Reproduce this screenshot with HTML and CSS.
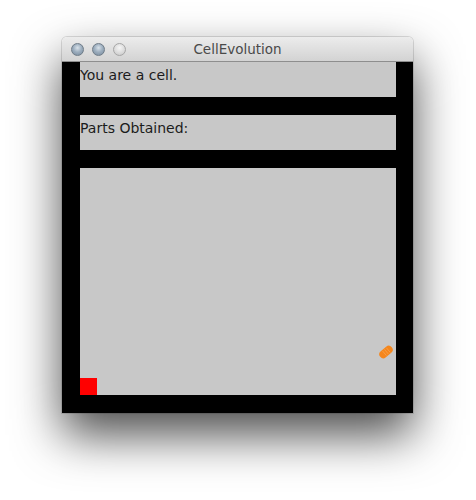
FILE: index.html
```html
<!DOCTYPE html>
<html>
<head>
<meta charset="utf-8">
<link rel="stylesheet" href="styles.css">
</head>
<body>
<div class="stage">
  <div class="window">
    <div class="titlebar">
      <div class="lights">
        <span class="light"></span>
        <span class="light"></span>
        <span class="light off"></span>
      </div>
      <div class="title">CellEvolution</div>
    </div>
    <div class="content">
      <div class="panel info">You are a cell.</div>
      <div class="panel info">Parts Obtained:</div>
      <div class="panel field">
        <div class="part">
          <svg width="18" height="18" viewBox="0 0 18 18">
            <g transform="rotate(-40 9 9)">
              <rect x="1.5" y="5" width="15" height="8" rx="4" fill="#f5861c"/>
              <path d="M7 6v6M9.5 6v6M12 6v6" stroke="#f8a04a" stroke-width="0.8"/>
            </g>
          </svg>
        </div>
        <div class="cell"></div>
      </div>
    </div>
  </div>
</div>
</body>
</html>
```
FILE: styles.css
```css
html, body {
  margin: 0;
  padding: 0;
  background: #ffffff;
}
.stage {
  width: 476px;
  height: 500px;
  padding: 37px 0 0 62px;
  box-sizing: border-box;
}
.window {
  width: 351px;
  border-radius: 5px 5px 0 0;
  box-shadow: 0 22px 48px rgba(0, 0, 0, 0.7), 0 0 0 1px rgba(0, 0, 0, 0.12);
}
.titlebar {
  height: 25px;
  box-sizing: border-box;
  border-radius: 5px 5px 0 0;
  background: linear-gradient(#ececec, #d3d3d3);
  border-bottom: 1px solid #8e8e8e;
  display: flex;
  align-items: center;
  position: relative;
  padding-left: 9px;
}
.lights {
  display: flex;
  gap: 8px;
}
.light {
  width: 13px;
  height: 13px;
  border-radius: 50%;
  box-sizing: border-box;
  border: 1px solid #6f7c88;
  background: radial-gradient(circle at 50% 35%, #d9e2ea 0%, #9fb0c0 45%, #75889b 100%);
}
.light.off {
  border-color: #a6a6a6;
  background: radial-gradient(circle at 50% 35%, #f6f6f6 0%, #dedede 50%, #c4c4c4 100%);
}
.title {
  position: absolute;
  left: 0;
  right: 0;
  top: 4px;
  text-align: center;
  font-family: "DejaVu Sans", sans-serif;
  font-size: 13.5px;
  line-height: 16px;
  color: #4a4a4a;
  pointer-events: none;
}
.content {
  background: #000000;
  padding: 0 17px 18px 18px;
  display: flex;
  flex-direction: column;
  gap: 18px;
}
.panel {
  background: #c8c8c8;
}
.info {
  height: 35px;
  box-sizing: border-box;
  padding-top: 5px;
  font-family: "DejaVu Sans", sans-serif;
  font-size: 14px;
  line-height: 16px;
  color: #1c1c1c;
}
.field {
  height: 227px;
  position: relative;
}
.cell {
  position: absolute;
  left: 0;
  bottom: 0;
  width: 17px;
  height: 17px;
  background: #ff0000;
}
.part {
  position: absolute;
  left: 297px;
  top: 175px;
  width: 18px;
  height: 18px;
}
.part svg {
  display: block;
}
```
